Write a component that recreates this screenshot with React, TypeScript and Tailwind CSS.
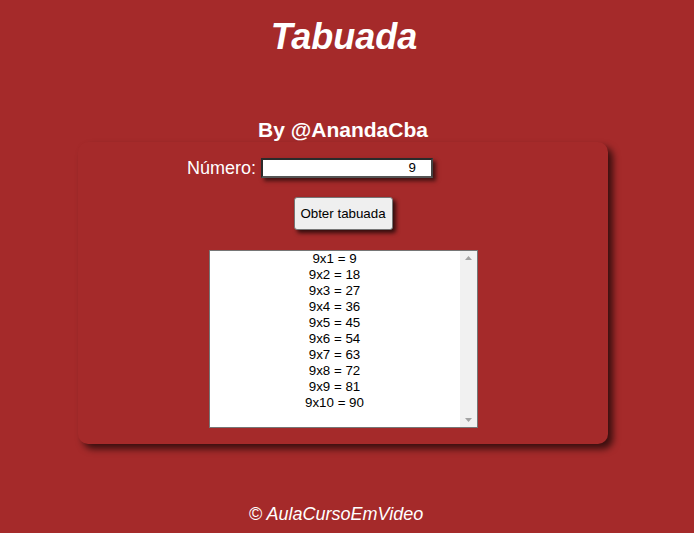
const rows = Array.from({ length: 10 }, (_, i) => `9x${i + 1} = ${9 * (i + 1)}`);

function FakeScrollbar() {
  return (
    <div className="flex w-[17px] flex-col items-center justify-between bg-[#f1f1f1] py-[5px]">
      <svg width="7" height="4" viewBox="0 0 7 4">
        <path d="M0 4 L3.5 0 L7 4 Z" fill="#a3a3a3" />
      </svg>
      <svg width="7" height="4" viewBox="0 0 7 4">
        <path d="M0 0 L3.5 4 L7 0 Z" fill="#a3a3a3" />
      </svg>
    </div>
  );
}

export default function App() {
  return (
    <div className="min-h-[533px] bg-[#a52a2a] font-['Liberation_Sans',Arial,sans-serif] text-white">
      <h1 className="pt-[17px] pr-[6px] text-center text-[36px] font-bold italic leading-[40px]">Tabuada</h1>

      <h2 className="mt-[61px] pr-[8px] text-center text-[21px] font-bold leading-[24px]">By @AnandaCba</h2>

      <div className="mx-[78px] w-[530px] rounded-[10px] bg-[#a52a2a] pt-[16px] pb-[16px] shadow-[5px_5px_7px_rgba(0,0,0,0.65)]">
        <div className="ml-[109px] flex items-center gap-[5px]">
          <span className="text-[18px] leading-[20px]">Número:</span>
          <div className="flex h-[20px] w-[172px] items-center justify-end border-2 border-[#2b2b2b] border-b-[#555] border-r-[#444] bg-white pr-[15px] text-[13.33px] text-black shadow-[3px_3px_4px_rgba(0,0,0,0.6)]">
            9
          </div>
        </div>

        <div className="mt-[19px] flex justify-center">
          <button className="h-[33px] w-[99px] rounded-[3px] border border-[#767676] bg-[#efefef] text-[13.33px] text-black shadow-[3px_3px_4px_rgba(0,0,0,0.7)]">
            Obter tabuada
          </button>
        </div>

        <div className="mx-auto mt-[20px] flex h-[178px] w-[269px] border border-[#767676] bg-white">
          <div className="flex-1 text-center text-[13.33px] leading-[16px] text-black">
            {rows.map((r) => (
              <div key={r}>{r}</div>
            ))}
          </div>
          <FakeScrollbar />
        </div>
      </div>

      <p className="mt-[60px] pr-[22px] text-center text-[18px] italic leading-[21px]">© AulaCursoEmVideo</p>
    </div>
  );
}
